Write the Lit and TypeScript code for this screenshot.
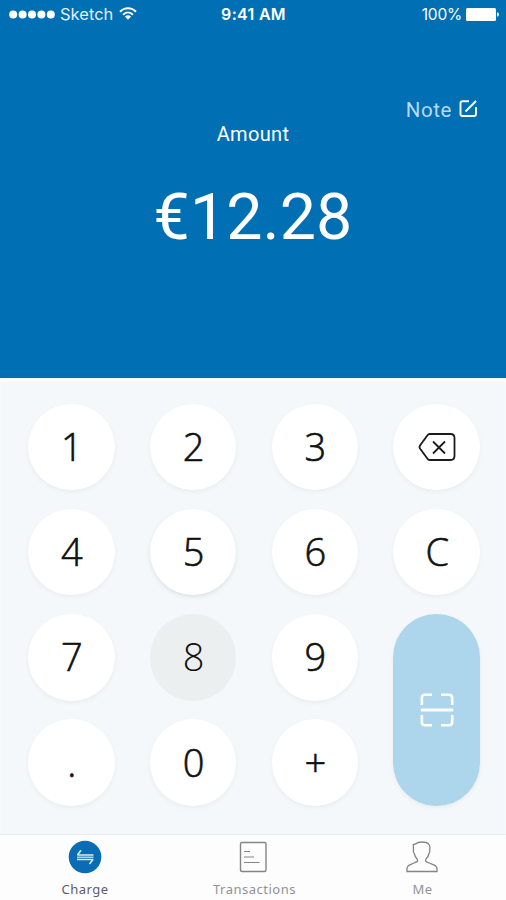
import { LitElement, html, css, svg } from "lit";
import { customElement } from "lit/decorators.js";
import { classMap } from "lit/directives/class-map.js";

@customElement("status-bar")
class StatusBar extends LitElement {
  static styles = css`
    :host { display: grid; grid-template-columns: 1fr auto 1fr; align-items: center; height: 29px; padding: 0 7px 0 9px; color: #fff; }
    .side { display: flex; align-items: center; }
    .right { justify-content: flex-end; }
    .carrier { font: 400 16.5px/20px Inter, sans-serif; margin: -1px 0 0 5px; color: #e4f0fa; }
    .wifi { margin: -2px 0 0 6px; }
    .time { font: 600 16px/20px Inter, sans-serif; letter-spacing: 0.3px; margin: -1px 1px 0 0; }
    .percent { font: 400 15.5px/20px Inter, sans-serif; margin-right: 4px; letter-spacing: -0.2px; }
    svg { display: block; fill: #fff; }
  `;
  render() {
    return html`
      <div class="side">
        <svg width="46" height="9" viewBox="0 0 46 9">
          ${[0, 1, 2, 3, 4].map((i) => svg`<circle cx=${4.2 + i * 9.4} cy="4.5" r="4"></circle>`)}
        </svg>
        <span class="carrier">Sketch</span>
        <svg class="wifi" width="18" height="13" viewBox="0 0 18 13">
          <path d="M1 4.800C5.500 0 12.500 0 17 4.800M4 7.700C7 4.700 11 4.700 14 7.700" fill="none" stroke="#fff" stroke-width="2"></path>
          <path d="M5.900 9.600Q9 7 12.100 9.600L9 12.700Z"></path>
        </svg>
      </div>
      <span class="time">9:41 AM</span>
      <div class="side right">
        <span class="percent">100%</span>
        <svg width="33" height="13" viewBox="0 0 33 13">
          <rect width="30" height="13" rx="1.500"></rect>
          <path d="M31 4.200q2 .6 2 2.300t-2 2.300z"></path>
        </svg>
      </div>
    `;
  }
}

@customElement("amount-panel")
class AmountPanel extends LitElement {
  static styles = css`
    :host { display: flex; flex-direction: column; height: 349px; color: #fff; font-family: Roboto, sans-serif; }
    .note { display: flex; align-items: center; align-self: flex-end; gap: 7px; margin: 69px 28px 0 0; height: 24px; font-size: 20.5px; line-height: 24px; letter-spacing: 0.6px; color: #b9d9f1; }
    .note svg { display: block; margin-top: -3px; }
    .label { text-align: center; font-size: 20px; line-height: 24px; letter-spacing: 0.35px; }
    .value { margin-top: 31px; text-align: center; font-size: 64.5px; line-height: 80px; letter-spacing: 0.1px; }
  `;
  render() {
    return html`
      <div class="note">
        <span>Note</span>
        <svg width="19" height="19" viewBox="0 0 19 19" fill="none" stroke="#fff" stroke-width="1.900">
          <path d="M10 2.200H3.500Q1.500 2.200 1.500 4.200V15Q1.500 17 3.500 17H15Q17 17 17 15V8"></path>
          <path d="M6.500 12.500L17 2"></path>
        </svg>
      </div>
      <div class="label">Amount</div>
      <div class="value">€12.28</div>
    `;
  }
}

const backspace = html`
  <svg width="38" height="30" viewBox="0 0 38 30" fill="none" stroke="#1c1c1c" stroke-width="1.800">
    <path d="M11.500 2H32.500Q36.500 2 36.500 6V24Q36.500 28 32.500 28H11.500Q10.300 28 9.500 26.800L2 16.500Q1 15 2 13.500L9.500 3.200Q10.300 2 11.500 2Z"></path>
    <path d="M15 9.500L27 21.500M27 9.500L15 21.500"></path>
  </svg>
`;

const scan = html`
  <svg width="34" height="34" viewBox="0 0 34 34" fill="none" stroke="#fff" stroke-width="2.600">
    <path d="M12 1.800H5Q1.800 1.800 1.800 5V12M21 1.800H29Q32.200 1.800 32.200 5V12M1.800 22V29Q1.800 32.200 5 32.200H12M21 32.200H29Q32.200 32.200 32.200 29V22"></path>
    <path d="M.8 17H33.200" stroke-width="3"></path>
  </svg>
`;

@customElement("key-pad")
class KeyPad extends LitElement {
  static styles = css`
    :host { display: block; box-sizing: border-box; height: 456px; padding: 25.5px 26px 0 28px; background: #f4f8fa; box-shadow: inset 0 3px 2px #fcfefe; }
    .grid { display: grid; grid-template-columns: repeat(4, 86.5px); grid-template-rows: repeat(4, 86.5px); justify-content: space-between; row-gap: 18.800px; }
    .key { display: flex; align-items: center; justify-content: center; border-radius: 44px; background: #fff; box-shadow: 0 2px 4px rgba(60, 70, 75, 0.06); color: #111; font: 300 38px/50px "Open Sans", "Noto Sans", sans-serif; -webkit-text-stroke: 0.6px #111; }
    .glyph { padding: 0 0 2px 1px; }
    .raised { box-shadow: 0 2px 4px rgba(60, 70, 75, 0.12); }
    .pressed { background: #ebeff0; box-shadow: none; -webkit-text-stroke-width: 0; }
    .scan { grid-row: 3 / span 2; grid-column: 4; background: #add5eb; }
    svg { display: block; }
  `;
  render() {
    const keys = ["1", "2", "3", backspace, "4", "5", "6", "C", "7", "8", "9", scan, ".", "0", "+"];
    return html`<div class="grid">
      ${keys.map((k) => html`<div class=${classMap({ key: true, raised: k === "5", pressed: k === "8", scan: k === scan })}>
        ${typeof k === "string" ? html`<span class="glyph">${k}</span>` : k}
      </div>`)}
    </div>`;
  }
}

const chargeIcon = html`
  <svg width="34" height="34" viewBox="0 0 34 34">
    <circle cx="17" cy="17" r="16.300" fill="#0a6db3"></circle>
    <g fill="none" stroke="#d9eafa">
      <path d="M9 17.200H25.500" stroke-width="1.200"></path>
      <path d="M13 10.300L9.500 15H25.500M21.500 24L25 19.500H9" stroke-width="1.600" stroke-linejoin="bevel"></path>
    </g>
  </svg>
`;

const listIcon = html`
  <svg width="34" height="34" viewBox="0 0 34 34" fill="none" stroke="#858585" stroke-width="1.400">
    <rect x="3.500" y="2.500" width="25.500" height="29" rx="1.500"></rect>
    <path d="M7 11.500H13M7 17H17M7 22.500H22.500" stroke-width="1.200"></path>
  </svg>
`;

const personIcon = html`
  <svg width="34" height="34" viewBox="0 0 34 34" fill="none" stroke="#858585" stroke-width="1.300">
    <path d="M2 31.500V29Q2 25.500 6 24.300L10 22.500Q14 21.500 12 19Q10 17 9.300 13.500Q7.700 12.500 8.500 10.500L8.300 4.500L10.500 4Q12.500 2 17 2Q22 2 23.500 4Q25.500 5 24.700 10.500Q25.300 12.500 24 13.500Q23.300 17 21 19Q19.500 21.500 23 22.500L27.500 24.300Q32 25.500 32 29V31.500Z"></path>
  </svg>
`;

@customElement("tab-item")
class TabItem extends LitElement {
  static properties = { label: {}, icon: { attribute: false }, active: { type: Boolean } };
  declare label: string;
  declare icon: unknown;
  declare active: boolean;
  static styles = css`
    :host { display: flex; flex-direction: column; align-items: center; padding-top: 5px; color: #929297; font: 400 13px/18px "Noto Sans", sans-serif; }
    .text { margin: 6px 0 0 1px; letter-spacing: 0.5px; }
    .active { color: #5c5c70; margin-left: 0; }
    svg { display: block; }
  `;
  render() {
    return html`${this.icon}<span class=${classMap({ text: true, active: this.active })}>${this.label}</span>`;
  }
}

@customElement("tab-bar")
class TabBar extends LitElement {
  static styles = css`
    :host { display: grid; grid-template-columns: 170px 1fr 168px; height: 65px; border-top: 1px solid #eceff0; background: #fdfdfd; }
  `;
  render() {
    return html`
      <tab-item label="Charge" .icon=${chargeIcon} active></tab-item>
      <tab-item label="Transactions" .icon=${listIcon}></tab-item>
      <tab-item label="Me" .icon=${personIcon}></tab-item>
    `;
  }
}

@customElement("app-root")
class AppRoot extends LitElement {
  static styles = css`
    :host { display: block; height: 900px; overflow: hidden; background: #fdfdfd; }
    .header { height: 378px; background: #006fb4; }
  `;
  render() {
    return html`
      <div class="header">
        <status-bar></status-bar>
        <amount-panel></amount-panel>
      </div>
      <key-pad></key-pad>
      <tab-bar></tab-bar>
    `;
  }
}
